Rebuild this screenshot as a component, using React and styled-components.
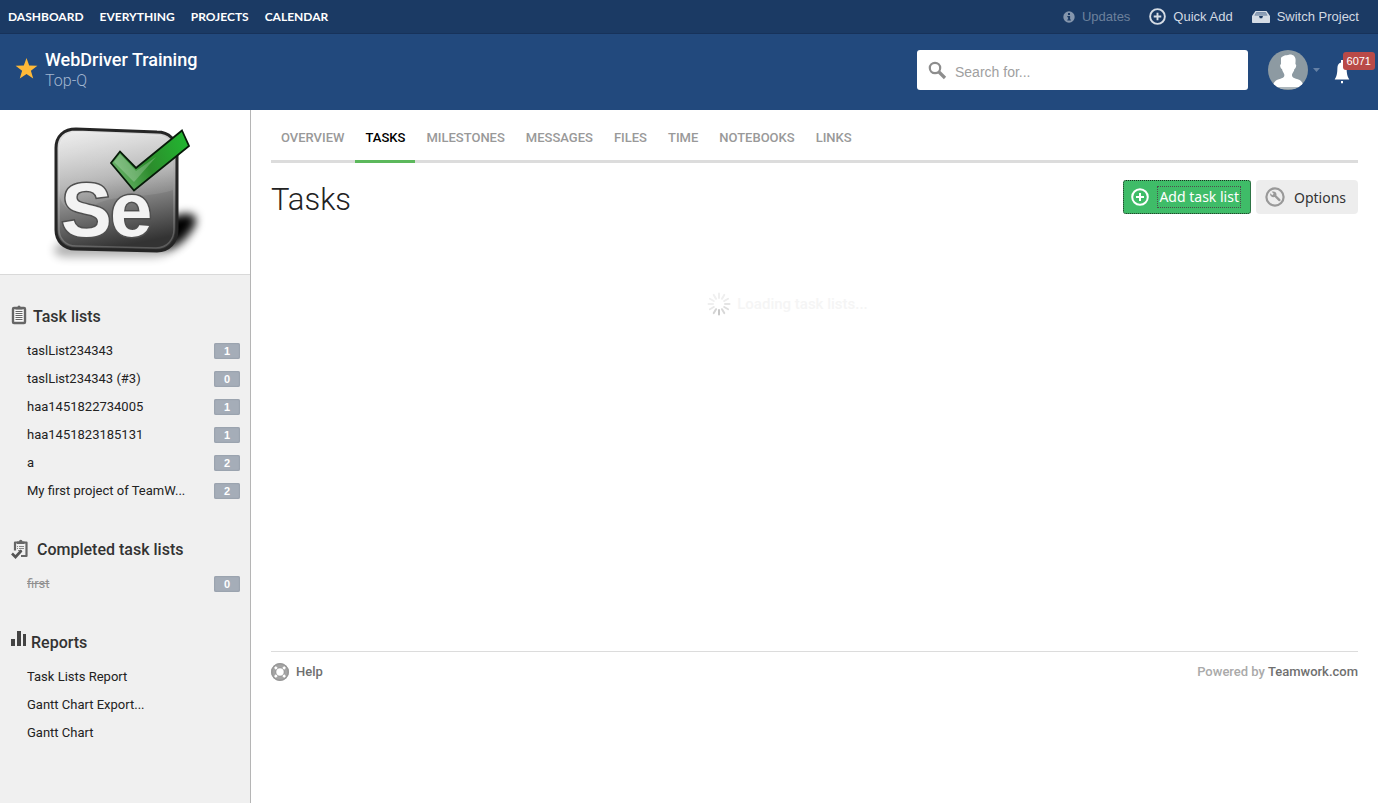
import React from 'react';
import styled, { createGlobalStyle } from 'styled-components';

const GlobalStyle = createGlobalStyle`
  *, *::before, *::after { box-sizing: border-box; }
  body {
    margin: 0;
    background: #fff;
    color: #222;
    font-family: Roboto, "Liberation Sans", sans-serif;
    font-size: 13px;
  }
  a { color: inherit; text-decoration: none; }
  ul { list-style: none; margin: 0; padding: 0; }
  button, input { font-family: inherit; }
  svg { display: block; flex: none; }
`;

const Page = styled.div`
  min-height: 100vh;
  display: flex;
  flex-direction: column;
`;

const TopBar = styled.div`
  height: 34px;
  padding: 0 19px 0 8px;
  display: flex;
  align-items: center;
  justify-content: space-between;
  background: #1b3a64;
  border-bottom: 1px solid #17325a;
`;

const TopNav = styled.nav`
  display: flex;
  gap: 16px;
  color: #fff;
  font-family: Lato, sans-serif;
  font-size: 12px;
  font-weight: 700;
`;

const TopActions = styled.div`
  display: flex;
  align-items: center;
  gap: 19px;
`;

const TopAction = styled.button`
  display: flex;
  align-items: center;
  gap: 7px;
  padding: 0;
  border: 0;
  background: none;
  color: ${(p) => (p.$muted ? '#6d819c' : '#d2d9e2')};
  font-family: "Liberation Sans", sans-serif;
  font-size: 13px;
`;

const Header = styled.header`
  height: 76px;
  padding: 16px 3px 0 15px;
  display: flex;
  align-items: flex-start;
  justify-content: space-between;
  background: #22497d;
`;

const Project = styled.div`
  display: flex;
  align-items: center;
  gap: 7px;
`;

const ProjectName = styled.h2`
  margin: 0;
  color: #fff;
  font-size: 18px;
  line-height: 20px;
  font-weight: 500;
`;

const Company = styled.a`
  display: block;
  color: #a3b6d0;
  font-size: 16px;
  line-height: 22px;
  font-weight: 300;
`;

const HeaderTools = styled.div`
  display: flex;
  align-items: center;
`;

const SearchBox = styled.label`
  width: 331px;
  height: 40px;
  padding: 0 11px;
  display: flex;
  align-items: center;
  gap: 8px;
  margin-right: 20px;
  border-radius: 3px;
  background: #fff;
`;

const SearchInput = styled.input`
  flex: 1;
  min-width: 0;
  padding: 4px 0 0;
  border: 0;
  outline: 0;
  background: none;
  font-family: "Liberation Sans", sans-serif;
  font-size: 14px;
  &::placeholder { color: #a0a0a0; opacity: 1; }
`;

const AvatarButton = styled.button`
  display: flex;
  align-items: center;
  gap: 5px;
  padding: 0;
  border: 0;
  background: none;
`;

const BellButton = styled.button`
  position: relative;
  width: 41px;
  height: 36px;
  margin-left: 14px;
  padding: 0;
  border: 0;
  background: none;
`;

const Badge = styled.span`
  position: absolute;
  top: 0;
  right: 0;
  padding: 0 4px;
  border-radius: 3px;
  background: #b94a48;
  color: #fff;
  font-family: "Liberation Sans", sans-serif;
  font-size: 11px;
  line-height: 18px;
`;

const Body = styled.div`
  flex: 1;
  display: flex;
`;

const Sidebar = styled.aside`
  flex: none;
  width: 251px;
  border-right: 1px solid #b5b5b5;
  background: #f0f0f0;
`;

const LogoPanel = styled.div`
  background: #fff;
  border-bottom: 1px solid #d9d9d9;
`;

const SideSections = styled.div`
  display: flex;
  flex-direction: column;
  gap: 25px;
  padding: 21px 10px 24px;
`;

const SideHeading = styled.h3`
  margin: 0;
  height: 40px;
  display: flex;
  align-items: center;
  gap: ${(p) => p.$gap || 5}px;
  color: #333;
  font-size: 16px;
  font-weight: 500;
`;

const SideItem = styled.li`
  height: 28px;
  padding-left: 17px;
  display: flex;
  align-items: center;
  justify-content: space-between;
  font-size: 13px;
`;

const SideLink = styled.a`
  color: ${(p) => (p.$done ? '#909090' : '#222')};
  text-decoration: ${(p) => (p.$done ? 'line-through' : 'none')};
`;

const Count = styled.span`
  width: 26px;
  margin-top: 2px;
  border-radius: 2px;
  background: #a5adb8;
  box-shadow: inset 0 0 2px #838c99;
  color: #fff;
  text-align: center;
  font-family: "Liberation Sans", sans-serif;
  font-size: 11px;
  font-weight: 700;
  line-height: 16px;
`;

const Main = styled.main`
  flex: 1;
  min-width: 0;
  padding: 0 20px;
`;

const Tabs = styled.nav`
  display: flex;
  gap: 1px;
  border-bottom: 3px solid #dcdcdc;
`;

const Tab = styled.a`
  height: 53px;
  margin-bottom: -3px;
  padding: 0 10px;
  border-bottom: 3px solid ${(p) => (p.$active ? '#5cb85c' : 'transparent')};
  color: ${(p) => (p.$active ? '#000' : '#999')};
  font-size: 13px;
  font-weight: 500;
  line-height: 55px;
`;

const TitleRow = styled.div`
  display: flex;
  align-items: flex-start;
  justify-content: space-between;
  padding-top: 17px;
`;

const Title = styled.h1`
  margin: 0;
  color: #222;
  font-size: 31px;
  font-weight: 300;
  line-height: 39px;
`;

const Buttons = styled.div`
  display: flex;
  gap: 5px;
`;

const ActionButton = styled.button`
  height: 34px;
  padding: 0 12px 0 9px;
  display: flex;
  align-items: center;
  gap: 9px;
  border: 0;
  border-radius: 4px;
  background: #ededed;
  color: #333;
  font-family: "Noto Sans", sans-serif;
  font-size: 14px;
`;

const PrimaryButton = styled(ActionButton)`
  padding: 0 9px 0 7px;
  gap: 8px;
  border: 1px dotted #1d2b21;
  border-radius: 3px;
  background: #3fbc68;
  color: #fff;
`;

const FocusRing = styled.span`
  padding: 0 1px;
  border: 1px dotted #4d4d4d;
  line-height: 20px;
`;

const Content = styled.section`
  min-height: 432px;
  padding: 73px 54px 0 0;
`;

const Loading = styled.p`
  margin: 0;
  display: flex;
  align-items: center;
  justify-content: center;
  gap: 6px;
  color: #f5f5f5;
  font-size: 15px;
  font-weight: 500;
`;

const Footer = styled.footer`
  height: 40px;
  display: flex;
  align-items: center;
  justify-content: space-between;
  border-top: 1px solid #dcdcdc;
  color: #aaa;
  font-weight: 500;
`;

const FooterLink = styled.a`
  display: ${(p) => (p.$icon ? 'flex' : 'inline')};
  align-items: center;
  gap: 7px;
  color: #6f6f6f;
`;

const InfoIcon = () => (
  <svg width="12" height="12" viewBox="0 0 12 12">
    <circle cx="6" cy="6" r="5.7" fill="#8596ad" />
    <path d="M5 2h2v2H5zM4.300 5h2.800v3.400h.8v1.200H4.300V8.400h.8V6.200h-.8z" fill="#1b3a64" />
  </svg>
);

const PlusCircle = ({ color, size }) => (
  <svg width={size} height={size} viewBox="0 0 18 18" fill="none" stroke={color} strokeWidth="2">
    <circle cx="9" cy="9" r="7.800" />
    <path d="M9 5v8M5 9h8" />
  </svg>
);

const TrayIcon = () => (
  <svg width="18" height="12" viewBox="0 0 18 12">
    <path d="M3.500 0h11L18 5v6.200a.8.800 0 0 1-.8.800H.8a.8.800 0 0 1-.8-.8V5z" fill="#d5dce5" />
    <path d="M4.300 1.300h9.400l1.900 3.200H2.400z" fill="#5f7898" />
    <path d="M4 2.400h10M3.300 3.600h11.400" stroke="#a9b6c8" strokeWidth=".7" />
    <path d="M7 5h4l-.8 2.200H7.800z" fill="#1b3a64" />
  </svg>
);

const StarIcon = () => (
  <svg width="23" height="26" viewBox="0 0 23 26">
    <path d="M11.500 0l2.700 7.500 8.200.2-6.500 5 2.300 7.900-6.700-4.700-6.700 4.700 2.300-7.900-6.500-5 8.200-.2z" fill="#ffb938" />
  </svg>
);

const SearchIcon = () => (
  <svg width="19" height="19" viewBox="0 0 19 19" fill="none" stroke="#8d8d8d">
    <circle cx="7" cy="7" r="5.200" strokeWidth="2.200" />
    <path d="M11 11l6 6" strokeWidth="3.200" />
  </svg>
);

const Avatar = () => (
  <svg width="40" height="40" viewBox="0 0 40 40">
    <clipPath id="face"><circle cx="20" cy="20" r="20" /></clipPath>
    <g clipPath="url(#face)">
      <path d="M0 0h40v40H0z" fill="#8d9aa2" />
      <path d="M13 8c2-3 5-2.500 8-3.300 3-.7 7 1.300 6.600 6l-.2 3.500c1.500-.2.800 4-1 4.800-.3 2.500-1.900 3.800-2.400 5.500-.3 3 2 3.600 5 4.500 4 1.100 6 3.500 6.800 8H4.500c.8-4.500 3-6.800 7-8 3-1 5.300-1.500 4.800-4.500-.5-1.700-1.900-3-2.300-5.500-1.800-.8-2.500-5-1-4.800z" fill="#fff" />
      <path d="M8 37h24v2H8z" fill="#aeb7bc" />
    </g>
  </svg>
);

const Caret = () => (
  <svg width="7" height="4" viewBox="0 0 7 4"><path d="M0 0h7L3.500 4z" fill="#6580a5" /></svg>
);

const BellIcon = () => (
  <svg width="16" height="32" viewBox="0 0 16 32">
    <path transform="translate(0 6)" d="M7 0h2v2.500c2.600.6 3.500 2.700 3.600 5.500.1 5.500.7 8.500 2.700 11.500H.7c2-3 2.600-6 2.700-11.500.1-2.800 1-4.900 3.600-5.500zM7 21h2v2.200H7z" fill="#fff" />
  </svg>
);

const SeleniumLogo = () => (
  <svg width="100%" height="164" viewBox="0 0 250 164" role="img" aria-label="Selenium">
    <defs>
      <linearGradient id="tile" x1=".15" y1="0" x2=".35" y2="1">
        <stop offset="0" stopColor="#e2e2e2" />
        <stop offset=".45" stopColor="#a8a8a8" />
        <stop offset="1" stopColor="#333" />
      </linearGradient>
      <linearGradient id="shine" x1="0" y1="0" x2=".2" y2="1">
        <stop offset="0" stopColor="#fff" stopOpacity=".65" />
        <stop offset="1" stopColor="#fff" stopOpacity=".1" />
      </linearGradient>
      <linearGradient id="tick" x1="0" y1=".6" x2="1" y2=".3">
        <stop offset="0" stopColor="#69b269" />
        <stop offset=".45" stopColor="#2c8c2c" />
        <stop offset="1" stopColor="#22b530" />
      </linearGradient>
      <filter id="soft" x="-30%" y="-60%" width="160%" height="220%"><feGaussianBlur stdDeviation="5" /></filter>
    </defs>
    <path d="M62 132l78-15 47-9c10 0 10 8 1 18-7 11-20 20-34 21H66c-16 0-14-11-4-15z" fill="#000" opacity=".3" filter="url(#soft)" />
    <path d="M160 110l24-6c15-1 14 7 6 17-7 10-17 17-28 17z" fill="#000" filter="url(#soft)" />
    <path d="M76 19l81 3c12 0 20 8 20 20v78c0 12-8 21-20 21l-82-2c-11 0-19-8-19-19V38c0-12 8-19 20-19z" fill="url(#tile)" stroke="#252525" strokeWidth="3" />
    <path d="M77 22l79 3c11 0 17 7 17 16v39c-31 10-61 2-83 18-14 10-31 0-31-17V39c0-10 7-17 18-17z" fill="url(#shine)" opacity=".6" />
    <path d="M77 22l79 3c11 0 18 7 18 17v77c0 11-7 19-18 19l-80-2c-10 0-17-7-17-17V39c0-10 7-17 18-17z" fill="none" stroke="#fff" strokeOpacity=".2" strokeWidth="1.500" />
    <text y="126" fontFamily="Liberation Sans, sans-serif" fontWeight="700" fontSize="76" fill="#f3f3f3" stroke="#505050" strokeWidth="3" paintOrder="stroke"><tspan x="61">S</tspan><tspan x="110">e</tspan></text>
    <path d="M182 20.500l7 15.500-55 44.500-23-27.500 9-11.500 16 16.500z" fill="url(#tick)" stroke="#071b09" strokeWidth="1.800" />
    <path d="M114 52l6-8 16 17 20-14-22 25z" fill="#fff" opacity=".22" />
  </svg>
);

const ClipboardIcon = () => (
  <svg width="18" height="22" viewBox="0 0 18 22">
    <rect x="3" y="3" width="12" height="15" rx="1" fill="#fafafa" stroke="#666" strokeWidth="2.400" />
    <path d="M5.500 2h2a1.500 1.500 0 0 1 3 0h2V4.500h-7z" fill="#666" />
    <path d="M5.500 6.500h7M5.500 8.500h7M5.500 10.500h7M5.500 12.500h7M5.500 14.500h7" stroke="#666" />
  </svg>
);

const ClipboardCheckIcon = () => (
  <svg width="19" height="20" viewBox="0 0 19 20">
    <path d="M5 11.500V3.500h11.500v13.500H11" fill="none" stroke="#666" strokeWidth="2.200" strokeLinejoin="round" />
    <path d="M7 2.500h2a1.500 1.500 0 0 1 3.500 0h2v2.500H7z" fill="#666" />
    <path d="M7 7.500h1M9 7.500h5M7 9.500h1M9 9.500h5M8 11.500h4" stroke="#888" />
    <path d="M2 14.500l3.500 3.500 6-6.500" fill="none" stroke="#555" strokeWidth="2.600" />
  </svg>
);

const BarsIcon = () => (
  <svg width="16" height="22" viewBox="0 0 16 22" fill="#444">
    <path d="M1 8h4v7H1zM7 0h4v15H7zM13 3h3v12h-3z" />
  </svg>
);

const WrenchIcon = () => (
  <svg width="20" height="20" viewBox="0 0 20 20">
    <circle cx="10" cy="10" r="8.600" fill="none" stroke="#999" strokeWidth="2.200" />
    <path d="M5.300 6.300l2 1.900 1.400-1.500-1.900-2c3-.9 5.200 1 4.600 3.700l3.900 3.900c1 1.100-.6 2.700-1.700 1.600L9.700 10c-2.800.7-5.200-1-4.400-3.700z" fill="#999" />
  </svg>
);

const Spinner = () => (
  <svg width="24" height="24" viewBox="0 0 24 24" strokeWidth="2" strokeLinecap="round">
    {Array.from({ length: 12 }, (_, i) => (
      <path
        key={i}
        d="M12 1.500v4.500"
        transform={`rotate(${i * 30} 12 12)`}
        stroke={['#efefef', '#efefef', '#ececec', '#e4e4e4', '#dedede', '#d8d8d8', '#c8c8c8', '#d4d4d4', '#e8e8e8', '#efefef', '#f0f0f0', '#f0f0f0'][i]}
      />
    ))}
  </svg>
);

const HelpIcon = () => (
  <svg width="18" height="18" viewBox="0 0 18 18" fill="none">
    <circle cx="9" cy="9" r="6.500" stroke="#a5a5a5" strokeWidth="5" />
    <circle cx="9" cy="9" r="4.300" stroke="#999" />
    <path d="M3.800 3.800l2 2M14.200 3.800l-2 2M3.800 14.200l2-2M14.200 14.200l-2-2" stroke="#fff" strokeWidth="2.600" />
    <circle cx="9" cy="9" r="8.200" stroke="#999" strokeWidth="1.600" />
  </svg>
);

const topLinks = ['DASHBOARD', 'EVERYTHING', 'PROJECTS', 'CALENDAR'];
const tabs = ['OVERVIEW', 'TASKS', 'MILESTONES', 'MESSAGES', 'FILES', 'TIME', 'NOTEBOOKS', 'LINKS'];
const sections = [
  {
    title: 'Task lists',
    icon: <ClipboardIcon />,
    items: [
      ['taslList234343', 1],
      ['taslList234343 (#3)', 0],
      ['haa1451822734005', 1],
      ['haa1451823185131', 1],
      ['a', 2],
      ['My first project of TeamW...', 2],
    ],
  },
  { title: 'Completed task lists', icon: <ClipboardCheckIcon />, gap: 8, done: true, items: [['first', 0]] },
  { title: 'Reports', icon: <BarsIcon />, items: [['Task Lists Report'], ['Gantt Chart Export...'], ['Gantt Chart']] },
];

export default function App() {
  return (
    <Page>
      <GlobalStyle />
      <TopBar>
        <TopNav>
          {topLinks.map((l) => <a key={l} href="#top">{l}</a>)}
        </TopNav>
        <TopActions>
          <TopAction $muted><InfoIcon />Updates</TopAction>
          <TopAction><PlusCircle color="#d5dce5" size={17} />Quick Add</TopAction>
          <TopAction><TrayIcon />Switch Project</TopAction>
        </TopActions>
      </TopBar>
      <Header>
        <Project>
          <StarIcon />
          <div>
            <ProjectName>WebDriver Training</ProjectName>
            <Company href="#company">Top-Q</Company>
          </div>
        </Project>
        <HeaderTools>
          <SearchBox>
            <SearchIcon />
            <SearchInput type="text" placeholder="Search for..." aria-label="Search" />
          </SearchBox>
          <AvatarButton aria-label="Account"><Avatar /><Caret /></AvatarButton>
          <BellButton aria-label="Notifications"><BellIcon /><Badge>6071</Badge></BellButton>
        </HeaderTools>
      </Header>
      <Body>
        <Sidebar>
          <LogoPanel><SeleniumLogo /></LogoPanel>
          <SideSections>
            {sections.map((s) => (
              <section key={s.title}>
                <SideHeading $gap={s.gap}>{s.icon}{s.title}</SideHeading>
                <ul>
                  {s.items.map(([name, count]) => (
                    <SideItem key={name}>
                      <SideLink href="#list" $done={s.done}>{name}</SideLink>
                      {count !== undefined && <Count>{count}</Count>}
                    </SideItem>
                  ))}
                </ul>
              </section>
            ))}
          </SideSections>
        </Sidebar>
        <Main>
          <Tabs>
            {tabs.map((t) => <Tab key={t} href="#tab" $active={t === 'TASKS'}>{t}</Tab>)}
          </Tabs>
          <TitleRow>
            <Title>Tasks</Title>
            <Buttons>
              <PrimaryButton><PlusCircle color="#fff" size={18} /><FocusRing>Add task list</FocusRing></PrimaryButton>
              <ActionButton><WrenchIcon />Options</ActionButton>
            </Buttons>
          </TitleRow>
          <Content>
            <Loading><Spinner />Loading task lists...</Loading>
          </Content>
          <Footer>
            <FooterLink $icon href="#help"><HelpIcon />Help</FooterLink>
            <span>Powered by <FooterLink href="#teamwork">Teamwork.com</FooterLink></span>
          </Footer>
        </Main>
      </Body>
    </Page>
  );
}
